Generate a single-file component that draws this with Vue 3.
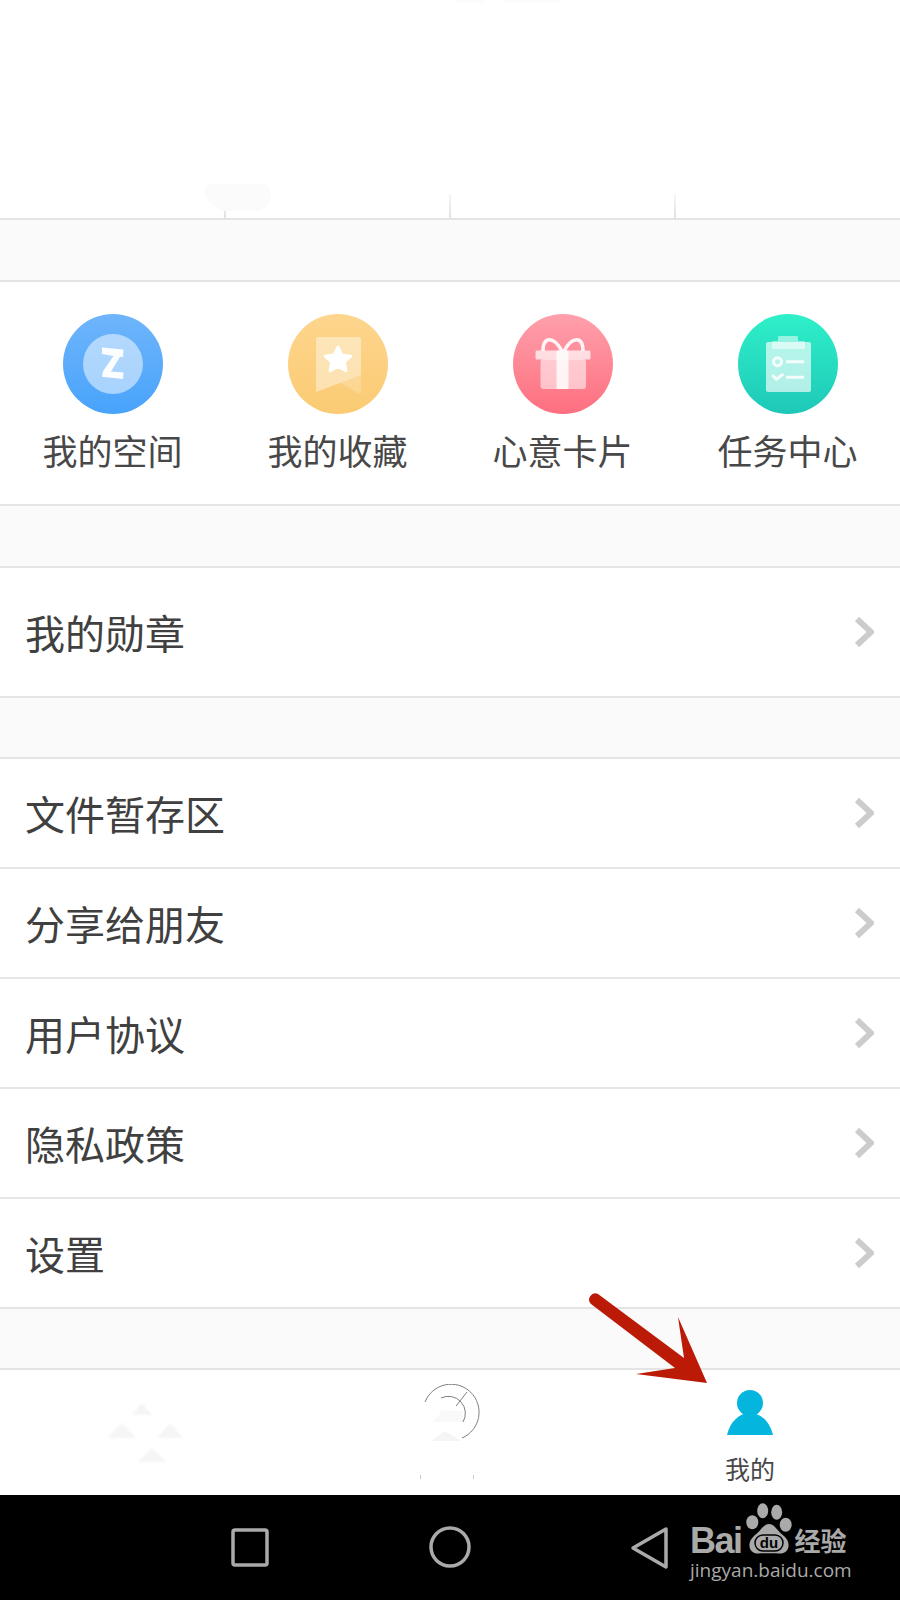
<script setup>
const shortcuts = [
  { key: 'space', label: '我的空间' },
  { key: 'fav', label: '我的收藏' },
  { key: 'card', label: '心意卡片' },
  { key: 'task', label: '任务中心' },
]
const groupA = ['我的勋章']
const groupB = ['文件暂存区', '分享给朋友', '用户协议', '隐私政策', '设置']
</script>

<template>
  <div class="screen">
    <div class="top">
      <div class="smudge-top"><i></i><i></i></div>
      <div class="smudge"></div>
      <div class="ticks"><i></i><i></i><i></i><b></b></div>
    </div>
    <div class="band"></div>

    <section class="shortcuts">
      <div v-for="s in shortcuts" :key="s.key" class="shortcut">
        <svg class="badge" viewBox="0 0 100 100" width="100" height="100">
          <defs>
            <linearGradient id="g-space" x1="0" y1="0" x2="0" y2="1"><stop offset="0" stop-color="#6fb5fb"/><stop offset="1" stop-color="#48a3fb"/></linearGradient>
            <linearGradient id="g-fav" x1="0" y1="0" x2="0" y2="1"><stop offset="0" stop-color="#fdd58d"/><stop offset="1" stop-color="#fbcb73"/></linearGradient>
            <linearGradient id="g-card" x1="0" y1="0" x2="0" y2="1"><stop offset="0" stop-color="#fea0ab"/><stop offset="1" stop-color="#fe6f80"/></linearGradient>
            <linearGradient id="g-task" x1="0" y1="0" x2="0" y2="1"><stop offset="0" stop-color="#2ff0c8"/><stop offset="1" stop-color="#1ec8b8"/></linearGradient>
          </defs>
          <circle cx="50" cy="50" r="50" :fill="`url(#g-${s.key})`"/>
          <g v-if="s.key === 'space'">
            <circle cx="50" cy="50" r="30" fill="#fff" fill-opacity=".5"/>
            <path d="M39 33.5 L60.5 35.5 L60 43 L57 42.7 L48 57.5 L60.5 58.5 L60 65 L39 62.7 L40 57.3 L50.5 42 L39 40 Z" fill="#fff" fill-opacity=".95"/>
          </g>
          <g v-else-if="s.key === 'fav'">
            <path d="M52 69 L73 61 V78 Q73 81 70 79 Z" fill="#fff" fill-opacity=".2"/>
            <path d="M28 25 Q28 23 30 23 H71 Q73 23 73 25 V61 L52 69 L28 78 Z" fill="#fff" fill-opacity=".42"/>
            <path d="M50 33 L53.8 41 L62.8 42.2 L56.2 48 L58 56.8 L50 52.4 L42 56.8 L43.8 48 L37.2 42.2 L46.2 41 Z" fill="#fff" stroke="#fff" stroke-width="3" stroke-linejoin="round"/>
          </g>
          <g v-else-if="s.key === 'card'">
            <path d="M30 37 C30 23 40 21 49 37 M51 37 C60 21 70 23 70 37" fill="none" stroke="#fff" stroke-opacity=".9" stroke-width="3.5"/>
            <rect x="27.5" y="45" width="45.5" height="30" rx="3" fill="#fff" fill-opacity=".55"/>
            <rect x="22.5" y="36.5" width="55" height="9" rx="1.5" fill="#fff" fill-opacity=".7"/>
            <rect x="43.5" y="36.5" width="12" height="38.5" fill="#fff" fill-opacity=".8"/>
          </g>
          <g v-else>
            <rect x="28" y="28" width="45" height="50" rx="2" fill="#fff" fill-opacity=".65"/>
            <path d="M34 35 V28 Q34 27 36 27 H40 V23 Q40 22 42 22 H58 Q60 22 60 23 V27 H65 Q67 27 67 28 V35 Z" fill="#fff" fill-opacity=".5"/>
            <circle cx="39.5" cy="47.7" r="4" fill="none" stroke="#fff" stroke-opacity=".85" stroke-width="3"/>
            <path d="M48 47.7 H66 M48 63.3 H66" stroke="#fff" stroke-opacity=".85" stroke-width="3"/>
            <path d="M34.3 61 L38.3 65.3 L45.3 60" fill="none" stroke="#fff" stroke-opacity=".85" stroke-width="3"/>
          </g>
        </svg>
        <span class="shortcut-label">{{ s.label }}</span>
      </div>
    </section>
    <div class="band"></div>

    <section class="list">
      <div v-for="item in groupA" :key="item" class="row row-tall">
        <span>{{ item }}</span>
        <svg class="chev" viewBox="0 0 20 32" width="20" height="32"><path d="M3 3 L17 16 L3 29" fill="none" stroke="#ccc" stroke-width="6"/></svg>
      </div>
    </section>
    <div class="band band-short"></div>

    <section class="list">
      <div v-for="item in groupB" :key="item" class="row">
        <span>{{ item }}</span>
        <svg class="chev" viewBox="0 0 20 32" width="20" height="32"><path d="M3 3 L17 16 L3 29" fill="none" stroke="#ccc" stroke-width="6"/></svg>
      </div>
    </section>
    <div class="band band-short"></div>

    <nav class="tabs">
      <div class="tab">
        <svg class="ghost" viewBox="0 0 90 60" width="90" height="60">
          <path d="M42 0 L32 12 H52 Z M22 20 L7 35 H37 Z M70 20 L57 35 H83 Z M52 45 L38 59 H67 Z" fill="#f5f5f5"/>
        </svg>
      </div>
      <div class="tab">
        <svg class="radar" viewBox="-4 0 64 96" width="64" height="96">
          <path d="M22 47 L10 57 H40 Z" fill="#f5f5f5"/>
          <path d="M11 38 L20 27 H41 V38 Z" fill="#f9f9f9"/>
          <path d="M3 18 A28 28 0 1 1 40 54" fill="none" stroke="#808080" stroke-width="1"/>
          <path d="M19 14 A17 17 0 0 1 41 38" fill="none" stroke="#808080" stroke-width="1"/>
          <path d="M34 22 L45 8" stroke="#808080" stroke-width="1"/>
          <rect x="-2" y="91" width="1" height="4" fill="#ccc"/>
          <rect x="51" y="91" width="1" height="4" fill="#ccc"/>
        </svg>
      </div>
      <div class="tab">
        <svg class="person" viewBox="0 0 46 46" width="46" height="46">
          <circle cx="23" cy="13" r="13" fill="#04b5dd"/>
          <path d="M0 45 C3 32 12 23 23 23 C34 23 43 32 46 45 Z" fill="#04b5dd"/>
        </svg>
        <span class="tab-label">我的</span>
      </div>
    </nav>

    <footer class="sysbar">
      <svg class="sys" viewBox="0 0 900 105" width="900" height="105">
        <rect x="233" y="35" width="34" height="35" rx="2" fill="none" stroke="#aaa" stroke-width="3.5"/>
        <circle cx="450" cy="52" r="19" fill="none" stroke="#aaa" stroke-width="3.5"/>
        <path d="M666 34 L633 53 L666 72 Z" fill="none" stroke="#aaa" stroke-width="3.5" stroke-linejoin="round"/>
      </svg>
      <div class="mark">
        <div class="mark-top">
          <span class="bai">Bai</span>
          <svg class="paw" viewBox="0 0 48 52" width="48" height="52">
            <ellipse cx="17.7" cy="7.7" rx="5.5" ry="7.5" fill="#aaa"/>
            <ellipse cx="31.7" cy="9.3" rx="5.5" ry="7.5" fill="#aaa"/>
            <ellipse cx="7.3" cy="19.3" rx="6" ry="7" fill="#aaa"/>
            <ellipse cx="40.7" cy="21.7" rx="6" ry="7" fill="#aaa"/>
            <path d="M24 21 C30 21 32 28 39 33 C47 40 44 51 34 50.5 C28 50 20 50 14 50.5 C4 51 1 40 9 33 C16 28 18 21 24 21 Z" fill="#aaa"/>
            <rect x="10" y="32" width="28" height="16" rx="8" fill="none" stroke="#000" stroke-width="1.5"/>
            <text x="24" y="45" text-anchor="middle" class="du">du</text>
          </svg>
          <span class="jy">经验</span>
        </div>
        <div class="url">jingyan.baidu.com</div>
      </div>
    </footer>

    <svg class="arrow" viewBox="0 0 130 100" width="130" height="100">
      <path d="M10 6 L96 70 L90 29 L119 95 L48 86 L87 80 L3 16 A6.2 6.2 0 0 1 10 6 Z" fill="#bb1a06"/>
    </svg>
  </div>
</template>

<style>
html, body { margin: 0; background: #fff; }
</style>

<style scoped>
.screen {
  position: relative;
  width: 900px;
  height: 1600px;
  overflow: hidden;
  display: flex;
  flex-direction: column;
  background: #fff;
  font-family: "Noto Sans CJK SC", "Liberation Sans", sans-serif;
}
.top {
  height: 218px;
  flex: none;
  display: flex;
  flex-direction: column;
  justify-content: flex-end;
  position: relative;
}
.smudge-top {
  position: absolute;
  left: 455px;
  top: 0;
  display: flex;
  gap: 20px;
}
.smudge-top i {
  display: block;
  width: 28px;
  height: 3px;
  background: #fbfbfb;
}
.smudge-top i + i { width: 58px; }
.smudge {
  position: absolute;
  left: 205px;
  top: 184px;
  width: 66px;
  height: 27px;
  border-radius: 6px 10px 18px 24px;
  background: #fbfbfb;
}
.ticks {
  height: 24px;
  display: grid;
  grid-template-columns: repeat(4, 225px);
}
.ticks i {
  display: block;
  justify-self: end;
  width: 2px;
  margin-right: -1px;
  background: linear-gradient(#f6f6f6, #e2e2e2);
}
.band {
  height: 60px;
  flex: none;
  background: #fafafa;
  border-top: 2px solid #e4e4e4;
  border-bottom: 2px solid #e4e4e4;
}
.band-short { height: 59px; }
.shortcuts {
  height: 222px;
  flex: none;
  display: grid;
  grid-template-columns: repeat(4, 225px);
  box-sizing: border-box;
  padding-top: 32px;
}
.shortcut {
  display: flex;
  flex-direction: column;
  align-items: center;
}
.badge { display: block; }
.shortcut-label {
  margin-top: 12px;
  font-size: 35px;
  line-height: 48px;
  color: #484848;
  white-space: nowrap;
}
.list {
  flex: none;
  display: flex;
  flex-direction: column;
}
.row {
  height: 110px;
  flex: none;
  box-sizing: border-box;
  display: flex;
  align-items: center;
  justify-content: space-between;
  padding: 0 26px 0 25px;
  font-size: 40px;
  color: #404040;
  border-bottom: 2px solid #e6e6e6;
}
.row:last-child { height: 108px; border-bottom: 0; }
.row-tall, .row-tall:last-child { height: 128px; border-bottom: 0; }
.chev { display: block; }
.tabs {
  height: 125px;
  flex: none;
  display: grid;
  grid-template-columns: repeat(3, 300px);
}
.tab {
  display: flex;
  flex-direction: column;
  align-items: center;
  position: relative;
}
.ghost { position: absolute; left: 100px; top: 33px; filter: blur(0.8px); }
.radar { position: absolute; left: 118px; top: 14px; }
.person { display: block; margin-top: 20px; }
.tab-label {
  margin-top: 15px;
  font-size: 25px;
  line-height: 34px;
  color: #484848;
}
.sysbar {
  height: 105px;
  flex: none;
  background: #000;
  position: relative;
}
.sys { display: block; }
.mark {
  position: absolute;
  left: 690px;
  top: 8px;
  width: 170px;
  color: #aaa;
}
.mark-top {
  display: flex;
  align-items: flex-end;
  height: 52px;
}
.bai {
  font-family: "Liberation Sans", sans-serif;
  font-weight: 700;
  font-size: 36px;
  line-height: 36px;
  letter-spacing: -1.5px;
  margin-bottom: -4px;
}
.paw { display: block; margin-left: 3px; flex: none; }
.du {
  font-family: "Liberation Sans", sans-serif;
  font-size: 15px;
  font-weight: 700;
  fill: #000;
}
.jy {
  font-size: 26px;
  line-height: 34px;
  font-weight: 700;
  margin-left: 2px;
  margin-bottom: -2px;
  white-space: nowrap;
}
.url {
  font-family: "Open Sans", sans-serif;
  font-size: 19px;
  line-height: 30px;
  white-space: nowrap;
}
.arrow {
  position: absolute;
  left: 588px;
  top: 1288px;
}
</style>
